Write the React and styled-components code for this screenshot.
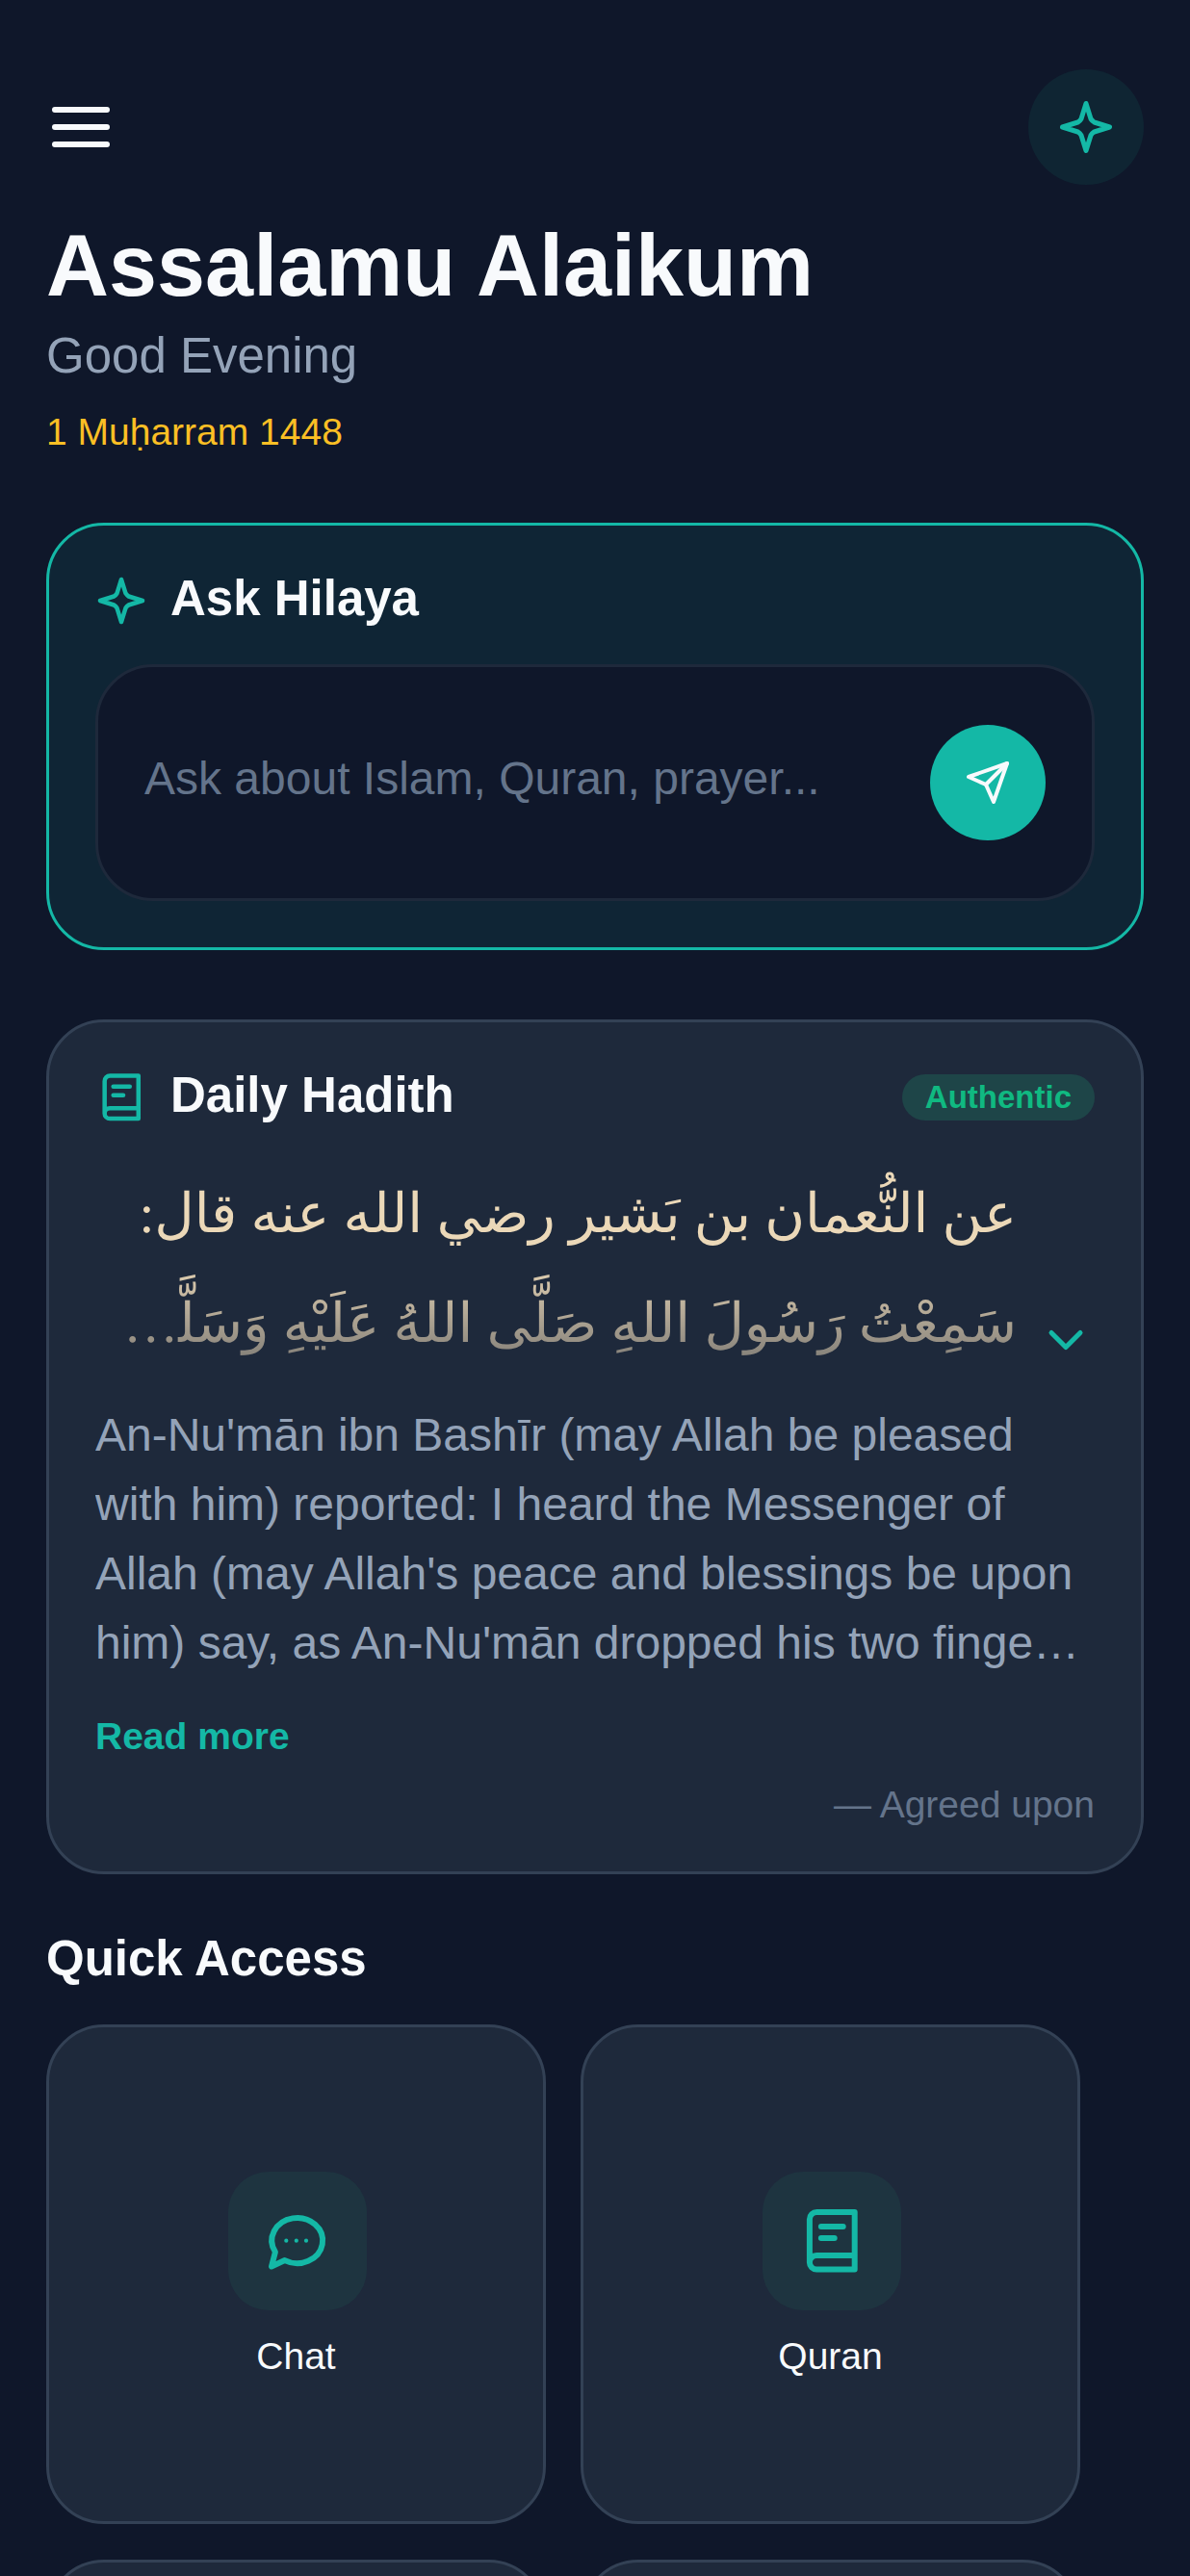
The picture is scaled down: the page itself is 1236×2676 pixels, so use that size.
import React from "react";
import styled, { createGlobalStyle } from "styled-components";
import { ChevronDown } from "lucide-react";
import { FiSend } from "react-icons/fi";

const Global = createGlobalStyle`
  html, body { margin: 0; padding: 0; background: #0f172a; }
  body { font-family: "Liberation Sans", Arial, sans-serif; overflow: hidden; }
  * { box-sizing: border-box; }
`;

const Page = styled.main`
  height: 2676px;
  overflow: hidden;
  padding: 72px 48px 0;
  background: #0f172a;
  color: #f8fafc;
`;

const TopBar = styled.header`
  display: flex;
  align-items: center;
  justify-content: space-between;
`;

const MenuButton = styled.button`
  display: flex;
  flex-direction: column;
  gap: 12px;
  padding: 0 6px;
  border: 0;
  background: none;
`;

const MenuBar = styled.span`
  display: block;
  width: 60px;
  height: 6px;
  border-radius: 3px;
  background: #f8fafc;
`;

const RoundButton = styled.button`
  display: flex;
  align-items: center;
  justify-content: center;
  width: 120px;
  height: 120px;
  border: 0;
  border-radius: 50%;
  background: ${(p) => p.$bg};
  color: ${(p) => p.$fg};
  flex: none;
`;

const Greeting = styled.section`
  margin-top: 30px;
`;

const Title = styled.h1`
  margin: 0;
  font-size: 90px;
  line-height: 108px;
  font-weight: 700;
  color: #f8fafc;
`;

const Subtitle = styled.p`
  margin: 10px 0 0;
  font-size: 51px;
  line-height: 60px;
  color: #94a3b8;
`;

const HijriDate = styled.p`
  margin: 25px 0 0;
  font-size: 39px;
  line-height: 48px;
  color: #fbbf24;
`;

const AskCard = styled.section`
  margin-top: 70px;
  height: 444px;
  padding: 48px;
  border: 3px solid #14b8a6;
  border-radius: 60px;
  background: #0f2535;
`;

const CardHead = styled.div`
  display: flex;
  align-items: center;
  gap: 24px;
`;

const CardTitle = styled.h2`
  flex: 1;
  margin: -2px 0 2px;
  font-size: 51px;
  line-height: 60px;
  font-weight: 700;
  color: #f8fafc;
`;

const InputBox = styled.div`
  display: flex;
  align-items: center;
  justify-content: space-between;
  height: 246px;
  margin-top: 36px;
  padding: 0 48px;
  border: 3px solid #1e293b;
  border-radius: 60px;
  background: #0f172a;
`;

const Placeholder = styled.span`
  margin-bottom: 10px;
  font-size: 48px;
  color: #64748b;
`;

const HadithCard = styled.section`
  margin-top: 72px;
  height: 888px;
  padding: 48px;
  border: 3px solid #334155;
  border-radius: 60px;
  background: #1e293b;
`;

const Badge = styled.span`
  padding: 6px 24px;
  border-radius: 36px;
  font-size: 33px;
  line-height: 36px;
  font-weight: 700;
  color: #10b981;
  background: #1e4548;
`;

const ArabicRow = styled.div`
  display: flex;
  align-items: flex-end;
  margin-top: 35px;
`;

const Arabic = styled.div`
  flex: 1;
  direction: rtl;
  font-family: "Liberation Serif", serif;
  text-rendering: geometricPrecision;
  font-size: 57px;
  line-height: 114px;
  color: #ebd8b8;
  display: -webkit-box;
  -webkit-box-orient: vertical;
  -webkit-line-clamp: 2;
  overflow: hidden;
  -webkit-mask-image: linear-gradient(to bottom, #000 45%, rgba(0, 0, 0, 0.4) 100%);
  mask-image: linear-gradient(to bottom, #000 45%, rgba(0, 0, 0, 0.4) 100%);
`;

const Chevron = styled.div`
  flex: none;
  width: 60px;
  margin: 0 0 11px 21px;
  color: #14b8a6;
  display: flex;
`;

const Translation = styled.p`
  margin: 22px 0 0;
  font-size: 48px;
  line-height: 72px;
  color: #94a3b8;
  display: -webkit-box;
  -webkit-box-orient: vertical;
  -webkit-line-clamp: 4;
  overflow: hidden;
`;

const ReadMore = styled.a`
  display: block;
  margin-top: 37px;
  font-size: 39px;
  line-height: 48px;
  font-weight: 700;
  color: #14b8a6;
`;

const Source = styled.p`
  margin: 23px 0 0;
  text-align: right;
  font-size: 39px;
  line-height: 48px;
  color: #64748b;
`;

const SectionTitle = styled.h2`
  margin: 58px 0 0;
  font-size: 51px;
  line-height: 60px;
  font-weight: 700;
  color: #f8fafc;
`;

const Grid = styled.div`
  display: grid;
  grid-template-columns: repeat(2, 519px);
  grid-auto-rows: 519px;
  gap: 37px 36px;
  margin-top: 38px;
`;

const Tile = styled.div`
  display: flex;
  flex-direction: column;
  align-items: center;
  justify-content: center;
  gap: 24px;
  padding-top: 3px;
  border: 3px solid #334155;
  border-radius: 60px;
  background: #1e293b;
`;

const TileIcon = styled.div`
  display: flex;
  align-items: center;
  justify-content: center;
  width: 144px;
  height: 144px;
  margin-left: 3px;
  border-radius: 42px;
  background: #1e3440;
  color: #14b8a6;
`;

const TileLabel = styled.span`
  font-size: 39px;
  line-height: 48px;
  color: #f8fafc;
`;

const IconSvg = ({ size, children }) => (
  <svg
    width={size}
    height={size}
    viewBox="0 0 24 24"
    fill="none"
    stroke="#14b8a6"
    strokeWidth="2"
    strokeLinecap="round"
    strokeLinejoin="round"
    style={{ flex: "none" }}
  >
    {children}
  </svg>
);

const StarIcon = ({ size }) => (
  <IconSvg size={size}>
    <path d="M12 2.2 14 8.6Q14.6 9.5 15.4 10L21.8 12 15.4 14Q14.5 14.5 14 15.4L12 21.8 10 15.4Q9.5 14.5 8.6 14L2.2 12 8.6 10Q9.5 9.5 10 8.6Z" />
  </IconSvg>
);

const BookIcon = ({ size }) => (
  <IconSvg size={size}>
    <path d="M4.3 19.4V4.5A2.5 2.5 0 0 1 6.8 2H19.9V21.8H6.7A2.4 2.4 0 0 1 6.7 17H19.9" />
    <path d="M8.3 7H15.9" />
    <path d="M8.3 11H12.9" />
  </IconSvg>
);

const ChatIcon = ({ size }) => (
  <IconSvg size={size}>
    <path d="M4.3 15.8A8.8 7.85 0 1 1 7.6 18.7L3 20.8Z" />
    <circle cx="8.1" cy="11.9" r="0.7" fill="#14b8a6" stroke="none" />
    <circle cx="11.6" cy="11.9" r="0.7" fill="#14b8a6" stroke="none" />
    <circle cx="15" cy="11.9" r="0.7" fill="#14b8a6" stroke="none" />
  </IconSvg>
);

export default function App() {
  return (
    <Page>
      <Global />
      <TopBar>
        <MenuButton aria-label="Menu">
          <MenuBar />
          <MenuBar />
          <MenuBar />
        </MenuButton>
        <RoundButton $bg="#0f2533" $fg="#14b8a6" aria-label="Hilaya">
          <StarIcon size={60} />
        </RoundButton>
      </TopBar>
      <Greeting>
        <Title>Assalamu Alaikum</Title>
        <Subtitle>Good Evening</Subtitle>
        <HijriDate>1 Muḥarram 1448</HijriDate>
      </Greeting>
      <AskCard>
        <CardHead>
          <StarIcon size={54} />
          <CardTitle>Ask Hilaya</CardTitle>
        </CardHead>
        <InputBox>
          <Placeholder>Ask about Islam, Quran, prayer...</Placeholder>
          <RoundButton $bg="#14b8a6" $fg="#f8fafc" aria-label="Send">
            <FiSend size={48} />
          </RoundButton>
        </InputBox>
      </AskCard>
      <HadithCard>
        <CardHead>
          <BookIcon size={54} />
          <CardTitle>Daily Hadith</CardTitle>
          <Badge>Authentic</Badge>
        </CardHead>
        <ArabicRow>
          <Arabic>عن النُّعمان بن بَشير رضي الله عنه قال: سَمِعْتُ رَسُولَ اللهِ صَلَّى اللهُ عَلَيْهِ وَسَلَّمَ يَقُولُ وَأَهْوَى النُّعْمَانُ بِإِصْبَعَيْهِ إِلَى أُذُنَيْهِ</Arabic>
          <Chevron>
            <ChevronDown size={60} strokeWidth={2} />
          </Chevron>
        </ArabicRow>
        <Translation>
          An-Nu'mān ibn Bashīr (may Allah be pleased with him) reported: I heard the Messenger of Allah (may Allah's peace and blessings be upon him) say, as An-Nu'mān dropped his two fingers towards his ears.
        </Translation>
        <ReadMore>Read more</ReadMore>
        <Source>— Agreed upon</Source>
      </HadithCard>
      <SectionTitle>Quick Access</SectionTitle>
      <Grid>
        <Tile>
          <TileIcon>
            <ChatIcon size={72} />
          </TileIcon>
          <TileLabel>Chat</TileLabel>
        </Tile>
        <Tile>
          <TileIcon>
            <BookIcon size={72} />
          </TileIcon>
          <TileLabel>Quran</TileLabel>
        </Tile>
        <Tile />
        <Tile />
      </Grid>
    </Page>
  );
}
